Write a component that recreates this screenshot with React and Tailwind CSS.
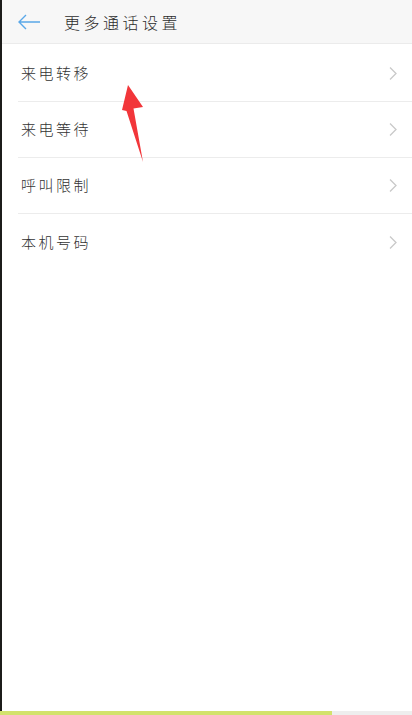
import React from 'react';

const items = ['来电转移', '来电等待', '呼叫限制', '本机号码'];

const Chevron = () => (
  <svg width="10" height="15" viewBox="0 0 10 15" fill="none">
    <path d="M2 1.5 L8 7.5 L2 13.5" stroke="#c9c9c9" strokeWidth="1.3" />
  </svg>
);

const App = () => {
  return (
    <div
      className="relative w-[412px] h-[715px] flex flex-col bg-white overflow-hidden"
      style={{ fontFamily: '"Noto Sans CJK SC", "Noto Sans", sans-serif' }}
    >
      <div className="flex flex-1 min-h-0">
        <div className="w-[2px] bg-[#1c1c1a]" />
        <div className="flex-1 flex flex-col">
          {/* header */}
          <header className="h-[44px] flex items-center bg-[#f7f7f7] border-b border-[#ebebeb]">
            <div className="w-[62px] pl-[15px] flex items-center">
              <svg width="24" height="16" viewBox="0 0 24 16" fill="none">
                <path d="M23 8 H2 M9 1 L2 8 L9 15" stroke="#5aa8e8" strokeWidth="1.4" />
              </svg>
            </div>
            <h1 className="text-[16px] tracking-[3.5px] text-[#2c2c2c] font-light">更多通话设置</h1>
          </header>
          {/* list */}
          <ul className="pl-[16px] pt-[2px]">
            {items.map((t, i) => (
              <li
                key={t}
                className={
                  i < items.length - 1
                    ? 'h-[56px] flex items-center justify-between border-b border-[#ececec] pr-[14px]'
                    : 'h-[56px] flex items-center justify-between pr-[14px]'
                }
              >
                <span className="pl-[3px] text-[15px] tracking-[2.5px] text-[#333333] font-light">{t}</span>
                <Chevron />
              </li>
            ))}
          </ul>
        </div>
      </div>
      <div className="h-[4px] flex">
        <div className="w-[332px] bg-[#d3e26c]" />
        <div className="flex-1 bg-[#eeeeee]" />
      </div>
      {/* annotation arrow */}
      <svg
        className="absolute left-0 top-0 pointer-events-none"
        width="412"
        height="715"
        viewBox="0 0 412 715"
      >
        <path
          d="M128 85 L143 107 L133.5 108.5 L143 162 L126.5 111 L122 110 Z"
          fill="#f2363a"
        />
      </svg>
    </div>
  );
};

export default App;
